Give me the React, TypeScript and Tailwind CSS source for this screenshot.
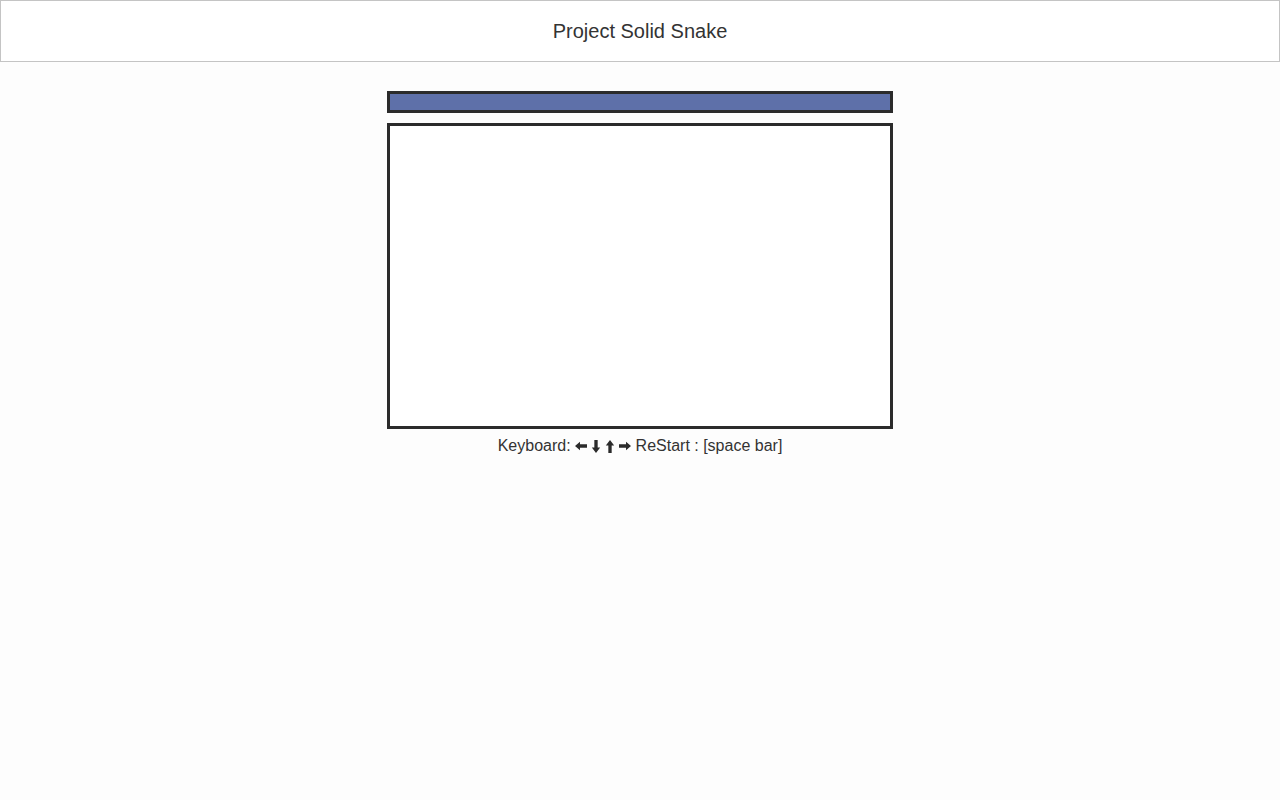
import React from 'react';

type ArrowProps = { dir: 'left' | 'right' | 'up' | 'down' };

// heavy block arrow, same glyph rotated
const Arrow: React.FC<ArrowProps> = ({ dir }: ArrowProps) => {
  const horizontal = dir === 'left' || dir === 'right';
  const rotate = { left: 0, right: 180, up: 90, down: 270 }[dir];
  return (
    <svg
      width={horizontal ? 12 : 10}
      height={horizontal ? 10 : 13}
      viewBox="-6 -6 12 12"
      className="inline-block align-[-1px]"
      preserveAspectRatio="none"
    >
      <path
        d="M-6 0 L-1 -5 L-1 -2 L6 -2 L6 2 L-1 2 L-1 5 Z"
        fill="#2b2b2b"
        transform={`rotate(${rotate})`}
      />
    </svg>
  );
};

const App: React.FC = () => {
  return (
    <div className="min-h-[800px] bg-[#fdfdfd] text-[#333333] font-['Liberation_Sans',Arial,sans-serif]">
      <header className="h-[62px] border border-[#c4c4c4] bg-white flex items-center justify-center">
        <h1 className="text-[20px] leading-none">Project Solid Snake</h1>
      </header>

      <main className="flex flex-col items-center pt-[29px]">
        <div className="w-[506px] h-[22px] border-[3px] border-[#2b2b2b] bg-[#5e70a9]" />
        <div className="mt-[10px] w-[506px] h-[306px] border-[3px] border-[#2b2b2b] bg-white" />
        <p className="mt-[7px] text-[16px] leading-[20px] flex items-center">
          <span>Keyboard:</span>
          <span className="ml-[4px] flex items-center gap-[4px]">
            <Arrow dir="left" />
            <Arrow dir="down" />
            <Arrow dir="up" />
            <Arrow dir="right" />
          </span>
          <span className="ml-[5px]">ReStart : [space bar]</span>
        </p>
      </main>
    </div>
  );
};

export default App;
